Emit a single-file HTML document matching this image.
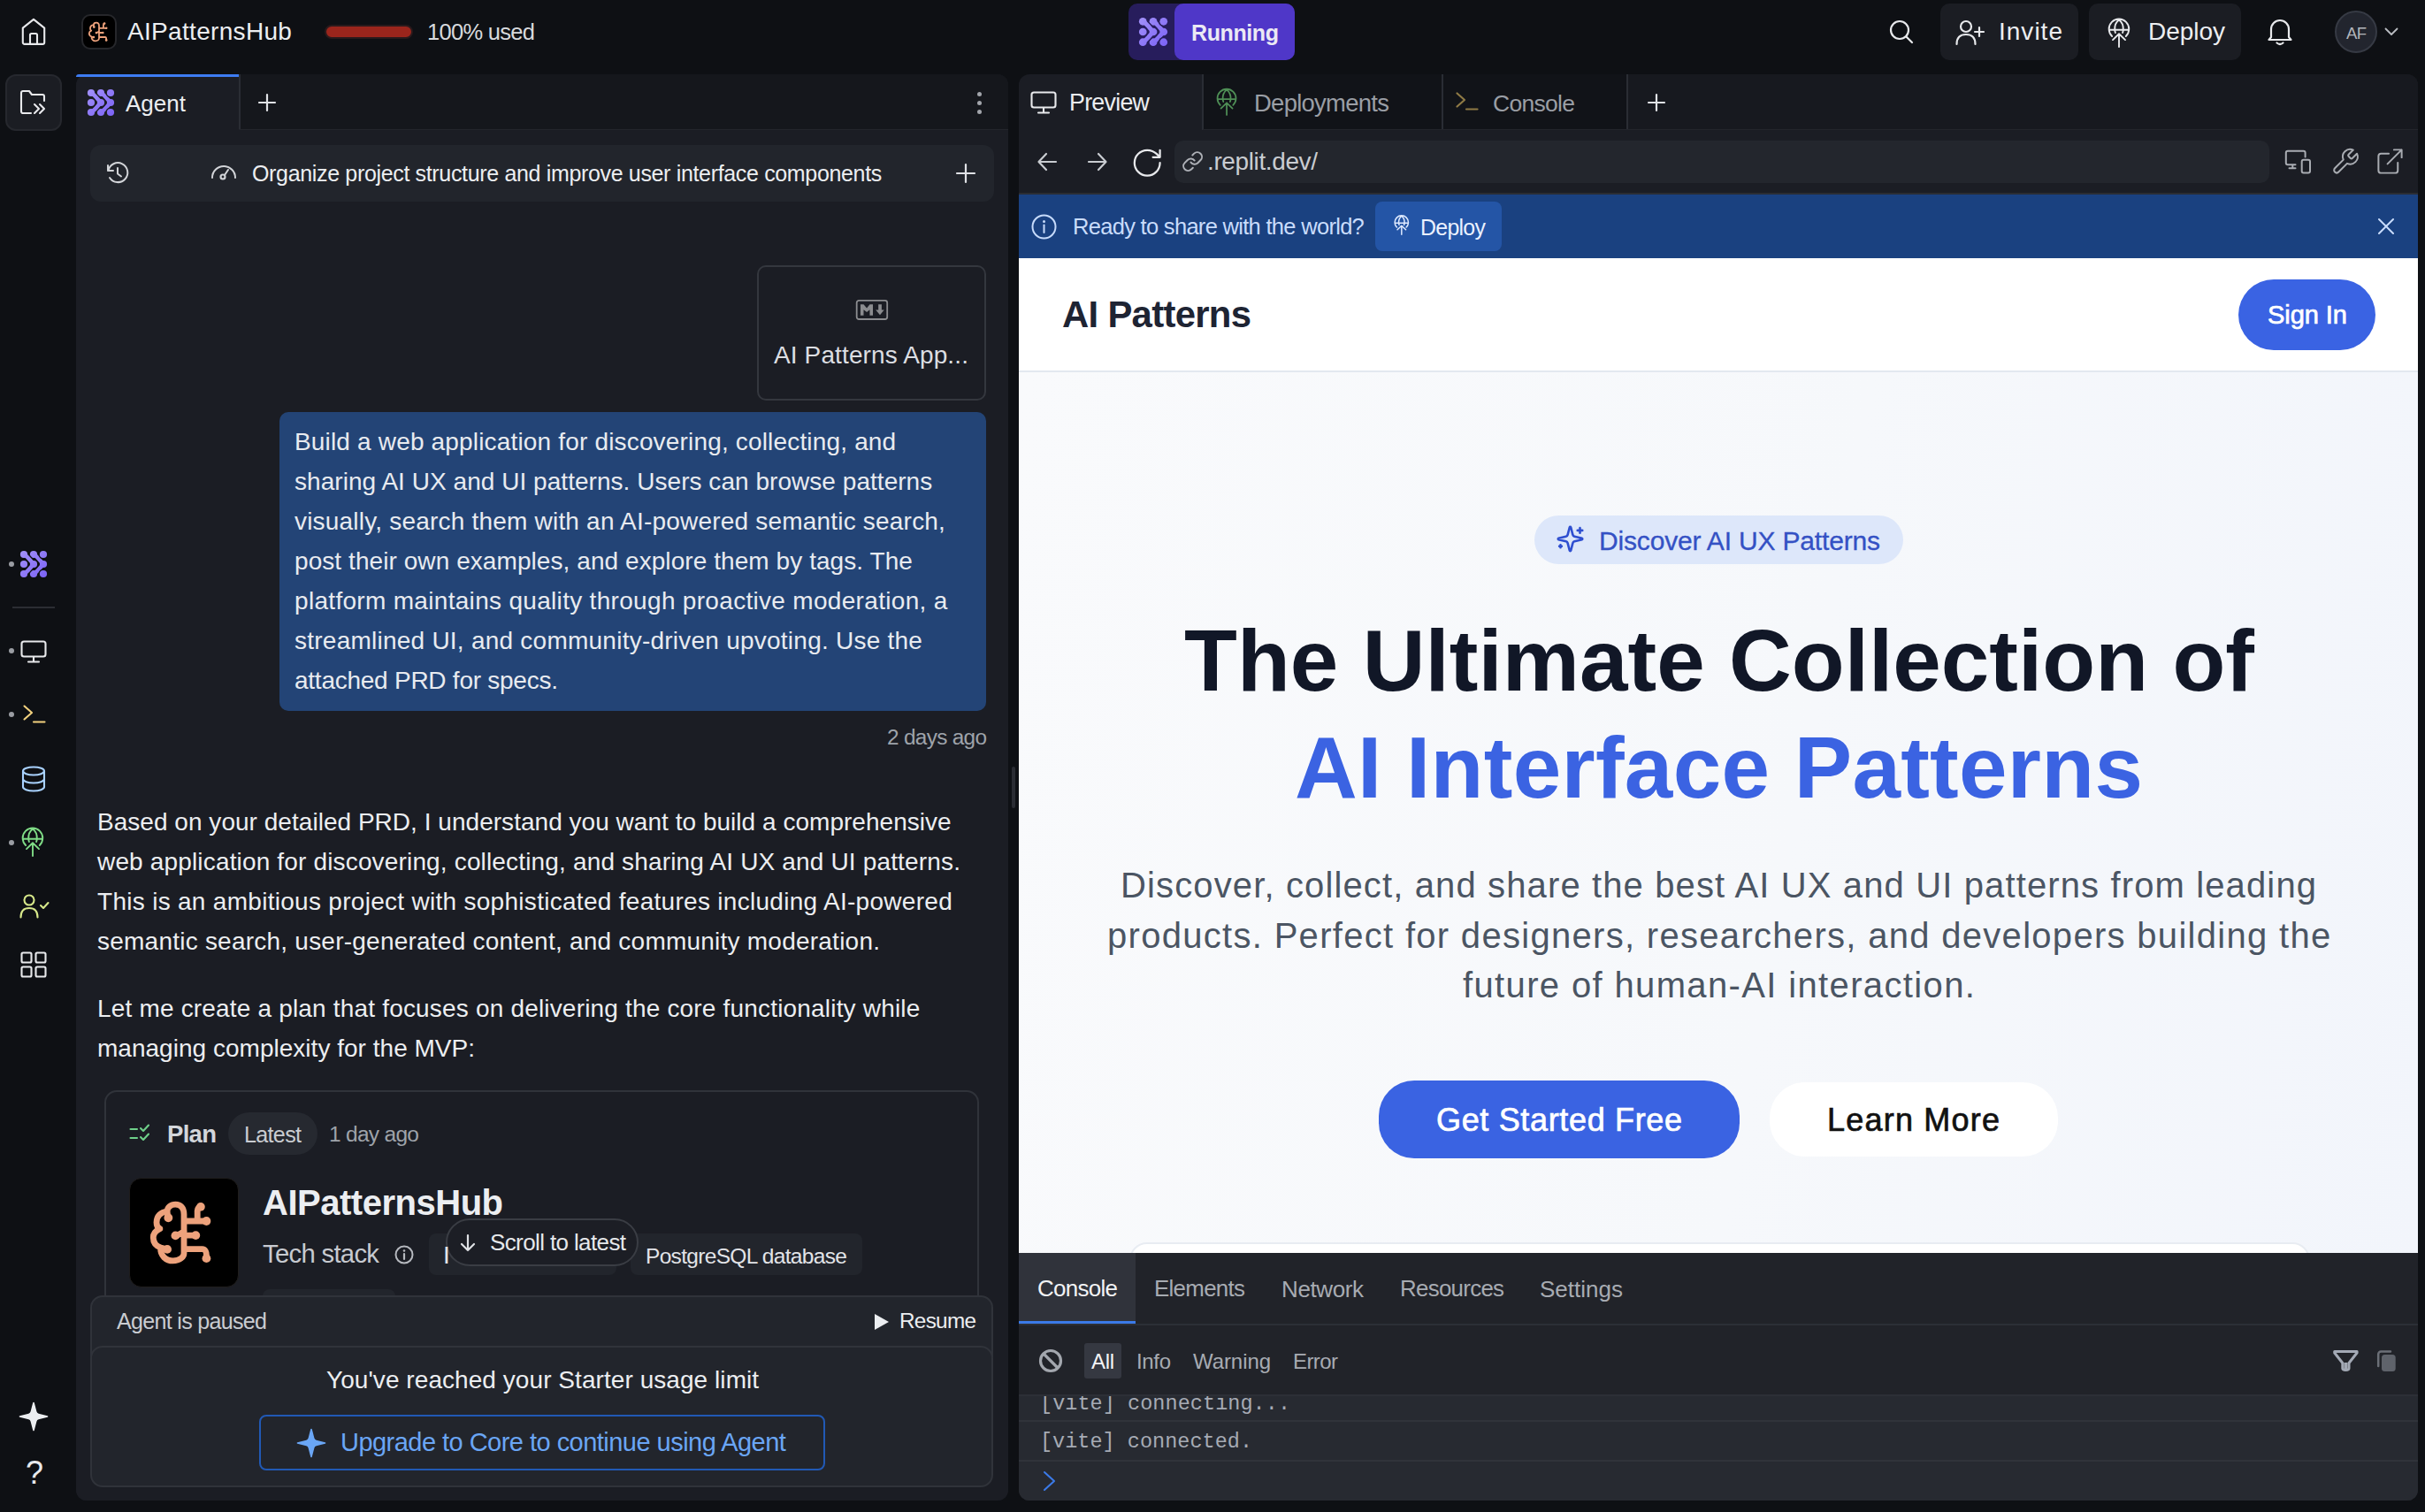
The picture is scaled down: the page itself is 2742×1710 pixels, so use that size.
<!DOCTYPE html>
<html><head><meta charset="utf-8"><style>
html,body{margin:0;padding:0;}
body{width:2742px;height:1710px;overflow:hidden;position:relative;background:#0e1014;font-family:'Liberation Sans', sans-serif;}
.t{position:absolute;white-space:pre;line-height:1;}
svg{overflow:visible}
</style></head><body>
<svg style="position:absolute;left:22px;top:20px;" width="32" height="32" viewBox="0 0 32 32" fill="none"><path d="M3.8 11.6 L16 1.9 L28.2 11.6 V27.9 a2 2 0 0 1 -2 2 H5.8 a2 2 0 0 1 -2 -2 Z M12 29.9 V19.5 a1.5 1.5 0 0 1 1.5 -1.5 H18.5 a1.5 1.5 0 0 1 1.5 1.5 V29.9" stroke="#e8e9ec" stroke-width="2.1" stroke-linejoin="round"/></svg>
<div style="position:absolute;left:92px;top:16px;width:40px;height:40px;background:#000;border-radius:10px;border:2px solid #26272b;box-sizing:border-box;"></div>
<svg style="position:absolute;left:92px;top:16px;" width="40" height="40" viewBox="0 0 40 40" fill="none"><path d="M20 27.6 V13.3 C20 11 18.8 9.7 16.9 9.7 C15.2 9.7 13.9 10.8 13.9 12.2 M13.9 12.2 C13.9 13.2 14.1 14 14.3 14.6 M13.9 12.2 C11.5 12.5 10 14 10 16.3 C10 17.5 10.4 18.2 11.2 18.6 M11.2 18.6 C9.6 19.4 8.8 20.5 8.8 21.8 C8.8 23.6 9.8 24.9 11.5 25.5 M11.5 25.5 C12.4 25.8 13.2 26 13.9 26.1 M11.5 25.5 C11.3 28.5 13.5 30.3 16 30.3 C18.5 30.3 20 28.8 20 27.6 M16.9 21.1 C18 21 19 20.3 20 19.5 M20 21 H24.3 M20 15.8 H28.2 M24.9 15.8 V12 C24.9 11.2 25.4 10.6 26.1 10.6 M20 26 H26.7 C27.8 26 28.2 27.2 28.2 28.2 V29.4" stroke="#eda27c" stroke-width="1.8" stroke-linecap="round" stroke-linejoin="round" fill="none"/><circle cx="26.1" cy="10.6" r="1.30" fill="#eda27c"/><circle cx="28.2" cy="15.8" r="1.30" fill="#eda27c"/><circle cx="24.3" cy="21" r="1.30" fill="#eda27c"/><circle cx="16.9" cy="21.1" r="1.30" fill="#eda27c"/><circle cx="28.2" cy="29.4" r="1.30" fill="#eda27c"/><circle cx="14.3" cy="14.6" r="1.30" fill="#eda27c"/><circle cx="13.9" cy="26.1" r="1.30" fill="#eda27c"/></svg>
<div class="t" style="left:144.0px;top:22.2px;font-family:'Liberation Sans', sans-serif;font-size:28.00px;font-weight:400;color:#eceef1;letter-spacing:0.32px;">AIPatternsHub</div>
<div style="position:absolute;left:367px;top:28px;width:100px;height:16px;background:#9b251c;border-radius:8px;border:2px solid #2a1a1c;box-sizing:border-box;"></div>
<div class="t" style="left:483.0px;top:24.3px;font-family:'Liberation Sans', sans-serif;font-size:25.50px;font-weight:400;color:#d8dadd;letter-spacing:-0.70px;">100% used</div>
<div style="position:absolute;left:1276px;top:4px;width:188px;height:64px;background:#271d5c;border-radius:10px;"></div>
<div style="position:absolute;left:1328px;top:4px;width:136px;height:64px;background:#4f37c8;border-radius:10px;"></div>
<svg style="position:absolute;left:1288px;top:20px;" width="32" height="32" viewBox="0 0 30 30" fill="none"><defs><linearGradient id="ag1" gradientUnits="userSpaceOnUse" x1="0" y1="0" x2="30" y2="30"><stop offset="0" stop-color="#a291f8"/><stop offset="1" stop-color="#7b62f6"/></linearGradient></defs><path d="M15 4 C19 6 23 12 26 15 C23 18 19 24 15 26" stroke="#271d5c" stroke-width="7.3999999999999995" stroke-linecap="round" stroke-linejoin="round"/><circle cx="15" cy="4" r="5.5" fill="#271d5c"/><circle cx="26" cy="15" r="5.5" fill="#271d5c"/><circle cx="15" cy="26" r="5.5" fill="#271d5c"/><path d="M15 4 C19 6 23 12 26 15 C23 18 19 24 15 26" stroke="url(#ag1)" stroke-width="4.6" stroke-linecap="round" stroke-linejoin="round"/><circle cx="15" cy="4" r="4.1" fill="url(#ag1)"/><circle cx="26" cy="15" r="4.1" fill="url(#ag1)"/><circle cx="15" cy="26" r="4.1" fill="url(#ag1)"/><circle cx="26" cy="4" r="5.5" fill="#271d5c"/><circle cx="26" cy="4" r="4.1" fill="url(#ag1)"/><circle cx="26" cy="26" r="5.5" fill="#271d5c"/><circle cx="26" cy="26" r="4.1" fill="url(#ag1)"/><path d="M4 4 C8 6 12 12 15 15 C12 18 8 24 4 26" stroke="#271d5c" stroke-width="7.3999999999999995" stroke-linecap="round" stroke-linejoin="round"/><circle cx="4" cy="4" r="5.5" fill="#271d5c"/><circle cx="15" cy="15" r="5.5" fill="#271d5c"/><circle cx="4" cy="26" r="5.5" fill="#271d5c"/><path d="M4 4 C8 6 12 12 15 15 C12 18 8 24 4 26" stroke="url(#ag1)" stroke-width="4.6" stroke-linecap="round" stroke-linejoin="round"/><circle cx="4" cy="4" r="4.1" fill="url(#ag1)"/><circle cx="15" cy="15" r="4.1" fill="url(#ag1)"/><circle cx="4" cy="26" r="4.1" fill="url(#ag1)"/><circle cx="4" cy="15" r="5.5" fill="#271d5c"/><circle cx="4" cy="15" r="4.1" fill="url(#ag1)"/></svg>
<div class="t" style="left:1347.0px;top:24.8px;font-family:'Liberation Sans', sans-serif;font-size:25.00px;font-weight:700;color:#ebe9f4;letter-spacing:-0.39px;">Running</div>
<svg style="position:absolute;left:2136px;top:22px;" width="28" height="28" viewBox="0 0 28 28" fill="none"><circle cx="12" cy="12" r="10" stroke="#e8e9ec" stroke-width="2.2"/><path d="M19.5 19.5 L26 26" stroke="#e8e9ec" stroke-width="2.2" stroke-linecap="round"/></svg>
<div style="position:absolute;left:2194px;top:4px;width:156px;height:64px;background:#1b1d23;border-radius:10px;"></div>
<svg style="position:absolute;left:2211px;top:22px;" width="34" height="30" viewBox="0 0 34 30" fill="none"><circle cx="12" cy="8" r="6" stroke="#e8e9ec" stroke-width="2.2"/><path d="M1.5 28 C1.5 20 6 17 12 17 C18 17 22.5 20 22.5 28" stroke="#e8e9ec" stroke-width="2.2" stroke-linecap="round"/><path d="M27 9 V19 M22 14 H32" stroke="#e8e9ec" stroke-width="2.2" stroke-linecap="round"/></svg>
<div class="t" style="left:2260.0px;top:22.2px;font-family:'Liberation Sans', sans-serif;font-size:28.00px;font-weight:400;color:#eceef1;letter-spacing:1.01px;">Invite</div>
<div style="position:absolute;left:2362px;top:4px;width:172px;height:64px;background:#1b1d23;border-radius:10px;"></div>
<svg style="position:absolute;left:2383px;top:22px;" width="28" height="32" viewBox="0 0 28 32" fill="none"><path d="M5.1 19 A11.3 11.3 0 1 1 20.8 19 M1.9 11.8 H24.1 M13 0.5 C9.5 3 8 7 8.2 11.8 C8.3 13 8.6 14 8.9 15 M13 0.5 C16.5 3 18 7 17.8 11.8 C17.7 13 17.4 14 17.1 15 M13 17.5 V31 M6 23.1 L13 16.3 L20 23.1" stroke="#e8e9ec" stroke-width="1.9" stroke-linecap="round" stroke-linejoin="round"/></svg>
<div class="t" style="left:2429.0px;top:22.2px;font-family:'Liberation Sans', sans-serif;font-size:28.00px;font-weight:400;color:#eceef1;letter-spacing:-0.03px;">Deploy</div>
<svg style="position:absolute;left:2563px;top:20px;" width="30" height="32" viewBox="0 0 30 32" fill="none"><path d="M5 22 V13 A10 10 0 0 1 25 13 V22 L27.5 25 H2.5 Z" stroke="#e8e9ec" stroke-width="2.2" stroke-linejoin="round"/><path d="M11.5 28.5 Q15 31.5 18.5 28.5" stroke="#e8e9ec" stroke-width="2.2" stroke-linecap="round"/></svg>
<div style="position:absolute;left:2640px;top:12px;width:48px;height:48px;background:#22252e;border-radius:50%;border:2px solid #363a44;box-sizing:border-box;"></div>
<div class="t" style="left:2653.0px;top:29.2px;font-family:'Liberation Sans', sans-serif;font-size:18.54px;font-weight:400;color:#b3b6bc;letter-spacing:-0.70px;">AF</div>
<svg style="position:absolute;left:2696px;top:31px;" width="16" height="10" viewBox="0 0 16 10" fill="none"><path d="M1.5 1.5 L8 8 L14.5 1.5" stroke="#b9bcc2" stroke-width="1.8" stroke-linecap="round" stroke-linejoin="round"/></svg>
<div style="position:absolute;left:6px;top:84px;width:64px;height:64px;background:#1b1d23;border-radius:12px;border:2px solid #26282e;box-sizing:border-box;"></div>
<svg style="position:absolute;left:22px;top:101px;" width="32" height="30" viewBox="0 0 32 30" fill="none"><path d="M13 27 H4 a2 2 0 0 1 -2 -2 V4 a2 2 0 0 1 2 -2 H11 L14 6 H26 a2 2 0 0 1 2 2 V13" stroke="#e8e9ec" stroke-width="2.1" stroke-linejoin="round" stroke-linecap="round"/><path d="M17 17 L22 22 L17 27 M23 17 L28 22 L23 27" stroke="#e8e9ec" stroke-width="2.1" stroke-linecap="round" stroke-linejoin="round"/></svg>
<div style="position:absolute;left:10px;top:635px;width:6px;height:6px;background:#9a9da3;border-radius:50%;"></div>
<svg style="position:absolute;left:23px;top:623px;" width="30" height="30" viewBox="0 0 30 30" fill="none"><defs><linearGradient id="ag2" gradientUnits="userSpaceOnUse" x1="0" y1="0" x2="30" y2="30"><stop offset="0" stop-color="#a291f8"/><stop offset="1" stop-color="#7b62f6"/></linearGradient></defs><path d="M15 4 C19 6 23 12 26 15 C23 18 19 24 15 26" stroke="#0e1014" stroke-width="7.3999999999999995" stroke-linecap="round" stroke-linejoin="round"/><circle cx="15" cy="4" r="5.5" fill="#0e1014"/><circle cx="26" cy="15" r="5.5" fill="#0e1014"/><circle cx="15" cy="26" r="5.5" fill="#0e1014"/><path d="M15 4 C19 6 23 12 26 15 C23 18 19 24 15 26" stroke="url(#ag2)" stroke-width="4.6" stroke-linecap="round" stroke-linejoin="round"/><circle cx="15" cy="4" r="4.1" fill="url(#ag2)"/><circle cx="26" cy="15" r="4.1" fill="url(#ag2)"/><circle cx="15" cy="26" r="4.1" fill="url(#ag2)"/><circle cx="26" cy="4" r="5.5" fill="#0e1014"/><circle cx="26" cy="4" r="4.1" fill="url(#ag2)"/><circle cx="26" cy="26" r="5.5" fill="#0e1014"/><circle cx="26" cy="26" r="4.1" fill="url(#ag2)"/><path d="M4 4 C8 6 12 12 15 15 C12 18 8 24 4 26" stroke="#0e1014" stroke-width="7.3999999999999995" stroke-linecap="round" stroke-linejoin="round"/><circle cx="4" cy="4" r="5.5" fill="#0e1014"/><circle cx="15" cy="15" r="5.5" fill="#0e1014"/><circle cx="4" cy="26" r="5.5" fill="#0e1014"/><path d="M4 4 C8 6 12 12 15 15 C12 18 8 24 4 26" stroke="url(#ag2)" stroke-width="4.6" stroke-linecap="round" stroke-linejoin="round"/><circle cx="4" cy="4" r="4.1" fill="url(#ag2)"/><circle cx="15" cy="15" r="4.1" fill="url(#ag2)"/><circle cx="4" cy="26" r="4.1" fill="url(#ag2)"/><circle cx="4" cy="15" r="5.5" fill="#0e1014"/><circle cx="4" cy="15" r="4.1" fill="url(#ag2)"/></svg>
<div style="position:absolute;left:14px;top:686px;width:48px;height:2px;background:#2b2d33;border-radius:0;"></div>
<div style="position:absolute;left:10px;top:733px;width:6px;height:6px;background:#9a9da3;border-radius:50%;"></div>
<svg style="position:absolute;left:23px;top:724px;" width="30" height="26" viewBox="0 0 30 26" fill="none"><rect x="1.5" y="1.5" width="27" height="17" rx="2.5" stroke="#e8e9ec" stroke-width="2.1"/><path d="M15 19 V24 M9 24.5 H21" stroke="#e8e9ec" stroke-width="2.1" stroke-linecap="round"/></svg>
<div style="position:absolute;left:10px;top:805px;width:6px;height:6px;background:#9a9da3;border-radius:50%;"></div>
<svg style="position:absolute;left:26px;top:797px;" width="26" height="22" viewBox="0 0 26 22" fill="none"><path d="M1.5 1.5 L10 9 L1.5 16.5" stroke="#f3d27f" stroke-width="2.1" stroke-linecap="round" stroke-linejoin="round"/><path d="M12 19.5 H24.5" stroke="#f3d27f" stroke-width="2.1" stroke-linecap="round"/></svg>
<svg style="position:absolute;left:24px;top:866px;" width="28" height="30" viewBox="0 0 28 30" fill="none"><ellipse cx="14" cy="6" rx="12" ry="4.5" stroke="#a9d2ff" stroke-width="2.1"/><path d="M2 6 V24 C2 26.5 7.5 28.5 14 28.5 C20.5 28.5 26 26.5 26 24 V6 M2 15 C2 17.5 7.5 19.5 14 19.5 C20.5 19.5 26 17.5 26 15" stroke="#a9d2ff" stroke-width="2.1"/></svg>
<div style="position:absolute;left:10px;top:950px;width:6px;height:6px;background:#9a9da3;border-radius:50%;"></div>
<svg style="position:absolute;left:24px;top:937px;" width="28" height="32" viewBox="0 0 28 32" fill="none"><path d="M5.1 19 A11.3 11.3 0 1 1 20.8 19 M1.9 11.8 H24.1 M13 0.5 C9.5 3 8 7 8.2 11.8 C8.3 13 8.6 14 8.9 15 M13 0.5 C16.5 3 18 7 17.8 11.8 C17.7 13 17.4 14 17.1 15 M13 17.5 V31 M6 23.1 L13 16.3 L20 23.1" stroke="#7fdc86" stroke-width="1.9" stroke-linecap="round" stroke-linejoin="round"/></svg>
<svg style="position:absolute;left:22px;top:1011px;" width="34" height="28" viewBox="0 0 34 28" fill="none"><circle cx="11" cy="7" r="5.5" stroke="#d7e88a" stroke-width="2.1"/><path d="M1.5 26.5 C1.5 19 5.5 16 11 16 C16.5 16 20.5 19 20.5 26.5" stroke="#d7e88a" stroke-width="2.1" stroke-linecap="round"/><path d="M24 13 L27 16 L32.5 10" stroke="#d7e88a" stroke-width="2.1" stroke-linecap="round" stroke-linejoin="round"/></svg>
<svg style="position:absolute;left:23px;top:1076px;" width="30" height="30" viewBox="0 0 30 30" fill="none"><rect x="1.5" y="1.5" width="11" height="11" rx="1.5" stroke="#e8e9ec" stroke-width="2.1"/><rect x="17.5" y="1.5" width="11" height="11" rx="1.5" stroke="#e8e9ec" stroke-width="2.1"/><rect x="1.5" y="17.5" width="11" height="11" rx="1.5" stroke="#e8e9ec" stroke-width="2.1"/><rect x="17.5" y="17.5" width="11" height="11" rx="1.5" stroke="#e8e9ec" stroke-width="2.1"/></svg>
<svg style="position:absolute;left:22px;top:1586px;" width="32" height="32" viewBox="2.2 2.2 19.6 19.6" fill="none"><path d="M9.937 15.5A2 2 0 0 0 8.5 14.063l-6.135-1.582a.5.5 0 0 1 0-.962L8.5 9.936A2 2 0 0 0 9.937 8.5l1.582-6.135a.5.5 0 0 1 .963 0L14.063 8.5A2 2 0 0 0 15.5 9.937l6.135 1.581a.5.5 0 0 1 0 .964L15.5 14.063a2 2 0 0 0-1.437 1.437l-1.582 6.135a.5.5 0 0 1-.963 0z" fill="#eceef1"/></svg>
<div class="t" style="left:29.0px;top:1648.4px;font-family:'Liberation Sans', sans-serif;font-size:36.00px;font-weight:400;color:#e8e9ec;">?</div>
<div style="position:absolute;left:86px;top:84px;width:1054px;height:1613px;background:#1b1d24;border-radius:12px;"></div>
<div style="position:absolute;left:270px;top:84px;width:870px;height:63px;background:#15171c;border-radius:0 12px 0 0;"></div>
<div style="position:absolute;left:270px;top:84px;width:2px;height:63px;background:#2a2d34;border-radius:0;"></div>
<div style="position:absolute;left:270px;top:146px;width:870px;height:1px;background:#23252b;border-radius:0;"></div>
<div style="position:absolute;left:86px;top:84px;width:184px;height:3px;background:#3d7cf2;border-radius:12px 0 0 0;"></div>
<svg style="position:absolute;left:99px;top:101px;" width="30" height="30" viewBox="0 0 30 30" fill="none"><defs><linearGradient id="ag3" gradientUnits="userSpaceOnUse" x1="0" y1="0" x2="30" y2="30"><stop offset="0" stop-color="#a291f8"/><stop offset="1" stop-color="#7b62f6"/></linearGradient></defs><path d="M15 4 C19 6 23 12 26 15 C23 18 19 24 15 26" stroke="#1b1d24" stroke-width="7.3999999999999995" stroke-linecap="round" stroke-linejoin="round"/><circle cx="15" cy="4" r="5.5" fill="#1b1d24"/><circle cx="26" cy="15" r="5.5" fill="#1b1d24"/><circle cx="15" cy="26" r="5.5" fill="#1b1d24"/><path d="M15 4 C19 6 23 12 26 15 C23 18 19 24 15 26" stroke="url(#ag3)" stroke-width="4.6" stroke-linecap="round" stroke-linejoin="round"/><circle cx="15" cy="4" r="4.1" fill="url(#ag3)"/><circle cx="26" cy="15" r="4.1" fill="url(#ag3)"/><circle cx="15" cy="26" r="4.1" fill="url(#ag3)"/><circle cx="26" cy="4" r="5.5" fill="#1b1d24"/><circle cx="26" cy="4" r="4.1" fill="url(#ag3)"/><circle cx="26" cy="26" r="5.5" fill="#1b1d24"/><circle cx="26" cy="26" r="4.1" fill="url(#ag3)"/><path d="M4 4 C8 6 12 12 15 15 C12 18 8 24 4 26" stroke="#1b1d24" stroke-width="7.3999999999999995" stroke-linecap="round" stroke-linejoin="round"/><circle cx="4" cy="4" r="5.5" fill="#1b1d24"/><circle cx="15" cy="15" r="5.5" fill="#1b1d24"/><circle cx="4" cy="26" r="5.5" fill="#1b1d24"/><path d="M4 4 C8 6 12 12 15 15 C12 18 8 24 4 26" stroke="url(#ag3)" stroke-width="4.6" stroke-linecap="round" stroke-linejoin="round"/><circle cx="4" cy="4" r="4.1" fill="url(#ag3)"/><circle cx="15" cy="15" r="4.1" fill="url(#ag3)"/><circle cx="4" cy="26" r="4.1" fill="url(#ag3)"/><circle cx="4" cy="15" r="5.5" fill="#1b1d24"/><circle cx="4" cy="15" r="4.1" fill="url(#ag3)"/></svg>
<div class="t" style="left:142.0px;top:103.9px;font-family:'Liberation Sans', sans-serif;font-size:26.00px;font-weight:400;color:#eceef1;letter-spacing:0.01px;">Agent</div>
<svg style="position:absolute;left:292px;top:106px;" width="20" height="20" viewBox="0 0 20 20" fill="none"><path d="M10 1 V19 M1 10 H19" stroke="#e0e2e6" stroke-width="2.2" stroke-linecap="round"/></svg>
<div style="position:absolute;left:1105px;top:103.5px;width:5px;height:5px;background:#a2a5ab;border-radius:50%;"></div>
<div style="position:absolute;left:1105px;top:113.5px;width:5px;height:5px;background:#a2a5ab;border-radius:50%;"></div>
<div style="position:absolute;left:1105px;top:123.5px;width:5px;height:5px;background:#a2a5ab;border-radius:50%;"></div>
<div style="position:absolute;left:102px;top:164px;width:1022px;height:64px;background:#22252c;border-radius:12px;"></div>
<svg style="position:absolute;left:118px;top:181px;" width="30" height="30" viewBox="0 0 30 30" fill="none"><path d="M4 6 V12 H10" stroke="#d2d4d8" stroke-width="2" stroke-linecap="round" stroke-linejoin="round"/><path d="M4.5 12 A11 11 0 1 1 6 20" stroke="#d2d4d8" stroke-width="2" stroke-linecap="round"/><path d="M15 9 V15.5 L19 18.5" stroke="#d2d4d8" stroke-width="2" stroke-linecap="round" stroke-linejoin="round"/></svg>
<svg style="position:absolute;left:238px;top:183px;" width="30" height="22" viewBox="0 0 30 22" fill="none"><path d="M2 18 A13 13 0 0 1 28 18" stroke="#d2d4d8" stroke-width="2" stroke-linecap="round"/><circle cx="14" cy="17" r="2.5" stroke="#d2d4d8" stroke-width="2.2"/><path d="M16 15 L20 9" stroke="#d2d4d8" stroke-width="2" stroke-linecap="round"/></svg>
<div class="t" style="left:285.0px;top:183.8px;font-family:'Liberation Sans', sans-serif;font-size:25.00px;font-weight:400;color:#eceef1;letter-spacing:-0.34px;">Organize project structure and improve user interface components</div>
<svg style="position:absolute;left:1081px;top:185px;" width="22" height="22" viewBox="0 0 22 22" fill="none"><path d="M11 1 V21 M1 11 H21" stroke="#e0e2e6" stroke-width="2.2" stroke-linecap="round"/></svg>
<div style="position:absolute;left:856px;top:300px;width:259px;height:153px;background:#1b1d24;border-radius:10px;border:2px solid #34373e;box-sizing:border-box;"></div>
<svg style="position:absolute;left:967px;top:338px;" width="38" height="26" viewBox="0 0 38 26" fill="none"><rect x="1.7" y="1.95" width="34.5" height="21.05" rx="2.5" stroke="#8b8c8f" stroke-width="1.8"/><path d="M5.94 6.2 H9.5 L13.1 10.6 L16.45 6.2 H20 V18.7 H16.45 V12.2 L13.1 14.9 L9.5 12.2 V18.7 H5.94 Z" fill="#8b8c8f"/><path d="M26.2 6.2 H29.9 V12.6 H32.7 L28 18.3 L23.2 12.6 H26.2 Z" fill="#8b8c8f"/></svg>
<div class="t" style="left:875.0px;top:388.2px;font-family:'Liberation Sans', sans-serif;font-size:28.00px;font-weight:400;color:#dcdee2;letter-spacing:0.12px;">AI Patterns App...</div>
<div style="position:absolute;left:316px;top:466px;width:799px;height:338px;background:#234476;border-radius:10px;"></div>
<div class="t" style="left:333.0px;top:486.2px;font-family:'Liberation Sans', sans-serif;font-size:28.00px;font-weight:400;color:#e8ebf0;letter-spacing:0.17px;">Build a web application for discovering, collecting, and</div>
<div class="t" style="left:333.0px;top:531.2px;font-family:'Liberation Sans', sans-serif;font-size:28.00px;font-weight:400;color:#e8ebf0;letter-spacing:0.04px;">sharing AI UX and UI patterns. Users can browse patterns</div>
<div class="t" style="left:333.0px;top:576.2px;font-family:'Liberation Sans', sans-serif;font-size:28.00px;font-weight:400;color:#e8ebf0;letter-spacing:0.20px;">visually, search them with an AI-powered semantic search,</div>
<div class="t" style="left:333.0px;top:621.2px;font-family:'Liberation Sans', sans-serif;font-size:28.00px;font-weight:400;color:#e8ebf0;letter-spacing:0.07px;">post their own examples, and explore them by tags. The</div>
<div class="t" style="left:333.0px;top:666.2px;font-family:'Liberation Sans', sans-serif;font-size:28.00px;font-weight:400;color:#e8ebf0;letter-spacing:0.31px;">platform maintains quality through proactive moderation, a</div>
<div class="t" style="left:333.0px;top:711.2px;font-family:'Liberation Sans', sans-serif;font-size:28.00px;font-weight:400;color:#e8ebf0;letter-spacing:0.24px;">streamlined UI, and community-driven upvoting. Use the</div>
<div class="t" style="left:333.0px;top:756.2px;font-family:'Liberation Sans', sans-serif;font-size:28.00px;font-weight:400;color:#e8ebf0;letter-spacing:-0.25px;">attached PRD for specs.</div>
<div class="t" style="left:1003.0px;top:822.3px;font-family:'Liberation Sans', sans-serif;font-size:24.38px;font-weight:400;color:#9ea3aa;letter-spacing:-0.70px;">2 days ago</div>
<div class="t" style="left:110.0px;top:916.2px;font-family:'Liberation Sans', sans-serif;font-size:28.00px;font-weight:400;color:#eceef1;letter-spacing:0.03px;">Based on your detailed PRD, I understand you want to build a comprehensive</div>
<div class="t" style="left:110.0px;top:961.2px;font-family:'Liberation Sans', sans-serif;font-size:28.00px;font-weight:400;color:#eceef1;letter-spacing:0.16px;">web application for discovering, collecting, and sharing AI UX and UI patterns.</div>
<div class="t" style="left:110.0px;top:1006.2px;font-family:'Liberation Sans', sans-serif;font-size:28.00px;font-weight:400;color:#eceef1;letter-spacing:0.29px;">This is an ambitious project with sophisticated features including AI-powered</div>
<div class="t" style="left:110.0px;top:1051.2px;font-family:'Liberation Sans', sans-serif;font-size:28.00px;font-weight:400;color:#eceef1;letter-spacing:0.23px;">semantic search, user-generated content, and community moderation.</div>
<div class="t" style="left:110.0px;top:1127.2px;font-family:'Liberation Sans', sans-serif;font-size:28.00px;font-weight:400;color:#eceef1;letter-spacing:0.18px;">Let me create a plan that focuses on delivering the core functionality while</div>
<div class="t" style="left:110.0px;top:1172.2px;font-family:'Liberation Sans', sans-serif;font-size:28.00px;font-weight:400;color:#eceef1;letter-spacing:0.02px;">managing complexity for the MVP:</div>
<div style="position:absolute;left:118px;top:1233px;width:989px;height:250px;background:#1b1d24;border-radius:14px;border:2px solid #30333a;box-sizing:border-box;"></div>
<svg style="position:absolute;left:146px;top:1270px;" width="30" height="22" viewBox="0 0 30 22" fill="none"><path d="M1.5 7 H9 M1.5 17 H9" stroke="#6fd08a" stroke-width="2.1" stroke-linecap="round"/><path d="M13 6 L16 9 L22 2.5 M13 16 L16 19 L22 12.5" stroke="#6fd08a" stroke-width="2.1" stroke-linecap="round" stroke-linejoin="round"/></svg>
<div class="t" style="left:189.0px;top:1268.6px;font-family:'Liberation Sans', sans-serif;font-size:27.51px;font-weight:700;color:#d3d6db;letter-spacing:-0.70px;">Plan</div>
<div style="position:absolute;left:258px;top:1258px;width:101px;height:48px;background:#262930;border-radius:24px;"></div>
<div class="t" style="left:276.0px;top:1270.6px;font-family:'Liberation Sans', sans-serif;font-size:25.15px;font-weight:400;color:#c9ccd1;letter-spacing:-0.70px;">Latest</div>
<div class="t" style="left:372.0px;top:1271.2px;font-family:'Liberation Sans', sans-serif;font-size:24.49px;font-weight:400;color:#9ea3aa;letter-spacing:-0.70px;">1 day ago</div>
<div style="position:absolute;left:146px;top:1332px;width:124px;height:124px;background:#000;border-radius:14px;border:1.5px solid #1f1d1c;box-sizing:border-box;"></div>
<svg style="position:absolute;left:146px;top:1332px;" width="124" height="124" viewBox="0 0 40 40" fill="none"><path d="M20 27.6 V13.3 C20 11 18.8 9.7 16.9 9.7 C15.2 9.7 13.9 10.8 13.9 12.2 M13.9 12.2 C13.9 13.2 14.1 14 14.3 14.6 M13.9 12.2 C11.5 12.5 10 14 10 16.3 C10 17.5 10.4 18.2 11.2 18.6 M11.2 18.6 C9.6 19.4 8.8 20.5 8.8 21.8 C8.8 23.6 9.8 24.9 11.5 25.5 M11.5 25.5 C12.4 25.8 13.2 26 13.9 26.1 M11.5 25.5 C11.3 28.5 13.5 30.3 16 30.3 C18.5 30.3 20 28.8 20 27.6 M16.9 21.1 C18 21 19 20.3 20 19.5 M20 21 H24.3 M20 15.8 H28.2 M24.9 15.8 V12 C24.9 11.2 25.4 10.6 26.1 10.6 M20 26 H26.7 C27.8 26 28.2 27.2 28.2 28.2 V29.4" stroke="#eda27c" stroke-width="2.2" stroke-linecap="round" stroke-linejoin="round" fill="none"/><circle cx="26.1" cy="10.6" r="1.58" fill="#eda27c"/><circle cx="28.2" cy="15.8" r="1.58" fill="#eda27c"/><circle cx="24.3" cy="21" r="1.58" fill="#eda27c"/><circle cx="16.9" cy="21.1" r="1.58" fill="#eda27c"/><circle cx="28.2" cy="29.4" r="1.58" fill="#eda27c"/><circle cx="14.3" cy="14.6" r="1.58" fill="#eda27c"/><circle cx="13.9" cy="26.1" r="1.58" fill="#eda27c"/></svg>
<div class="t" style="left:297.0px;top:1340.0px;font-family:'Liberation Sans', sans-serif;font-size:40.00px;font-weight:700;color:#eceef1;letter-spacing:-0.48px;">AIPatternsHub</div>
<div class="t" style="left:297.0px;top:1404.1px;font-family:'Liberation Sans', sans-serif;font-size:29.27px;font-weight:400;color:#c7cad0;letter-spacing:-0.70px;">Tech stack</div>
<svg style="position:absolute;left:446px;top:1408px;" width="22" height="22" viewBox="0 0 22 22" fill="none"><circle cx="11" cy="11" r="9.5" stroke="#b6b9bf" stroke-width="2"/><path d="M11 10 V16" stroke="#b6b9bf" stroke-width="2.2" stroke-linecap="round"/><circle cx="11" cy="6.5" r="1.3" fill="#b6b9bf"/></svg>
<div style="position:absolute;left:485px;top:1395px;width:212px;height:47px;background:#22252c;border-radius:8px;"></div>
<div style="position:absolute;left:713px;top:1395px;width:262px;height:47px;background:#22252c;border-radius:8px;"></div>
<div class="t" style="left:730.0px;top:1409.1px;font-family:'Liberation Sans', sans-serif;font-size:24.54px;font-weight:400;color:#e2e4e8;letter-spacing:-0.70px;">PostgreSQL database</div>
<div style="position:absolute;left:297px;top:1458px;width:150px;height:40px;background:#22252c;border-radius:8px;"></div>
<div style="position:absolute;left:504px;top:1378px;width:218px;height:54px;background:#1c1e25;border-radius:27px;border:2px solid #3a3d44;box-sizing:border-box;"></div>
<svg style="position:absolute;left:519px;top:1395px;" width="20" height="22" viewBox="0 0 20 22" fill="none"><path d="M10 2 V19 M3 12 L10 19 L17 12" stroke="#dfe1e5" stroke-width="2.2" stroke-linecap="round" stroke-linejoin="round"/></svg>
<div class="t" style="left:554.0px;top:1391.9px;font-family:'Liberation Sans', sans-serif;font-size:26.00px;font-weight:400;color:#e6e8eb;letter-spacing:-0.62px;">Scroll to latest</div>
<div class="t" style="left:501.0px;top:1406.2px;font-family:'Liberation Sans', sans-serif;font-size:28.00px;font-weight:400;color:#e2e4e8;">I</div>
<div style="position:absolute;left:86px;top:1475px;width:1054px;height:222px;background:#1b1d24;border-radius:0 0 12px 12px;"></div>
<div style="position:absolute;left:102px;top:1465px;width:1021px;height:70px;background:#22252c;border-radius:14px 14px 0 0;border:2px solid #30333a;box-sizing:border-box;"></div>
<div class="t" style="left:132.0px;top:1481.7px;font-family:'Liberation Sans', sans-serif;font-size:25.07px;font-weight:400;color:#c9ccd1;letter-spacing:-0.70px;">Agent is paused</div>
<svg style="position:absolute;left:988px;top:1485px;" width="18" height="20" viewBox="0 0 18 20" fill="none"><path d="M1 1 L17 10 L1 19 Z" fill="#eceef1"/></svg>
<div class="t" style="left:1017.0px;top:1482.3px;font-family:'Liberation Sans', sans-serif;font-size:24.30px;font-weight:400;color:#eceef1;letter-spacing:-0.70px;">Resume</div>
<div style="position:absolute;left:102px;top:1522px;width:1021px;height:160px;background:#22252c;border-radius:14px;border:2px solid #30333a;box-sizing:border-box;"></div>
<div class="t" style="left:369.0px;top:1547.2px;font-family:'Liberation Sans', sans-serif;font-size:28.00px;font-weight:400;color:#eceef1;letter-spacing:0.06px;">You&#x27;ve reached your Starter usage limit</div>
<div style="position:absolute;left:293px;top:1600px;width:640px;height:63px;background:transparent;border-radius:8px;border:2.5px solid #2159b5;box-sizing:border-box;"></div>
<svg style="position:absolute;left:336px;top:1616px;" width="32" height="32" viewBox="2.2 2.2 19.6 19.6" fill="none"><path d="M9.937 15.5A2 2 0 0 0 8.5 14.063l-6.135-1.582a.5.5 0 0 1 0-.962L8.5 9.936A2 2 0 0 0 9.937 8.5l1.582-6.135a.5.5 0 0 1 .963 0L14.063 8.5A2 2 0 0 0 15.5 9.937l6.135 1.581a.5.5 0 0 1 0 .964L15.5 14.063a2 2 0 0 0-1.437 1.437l-1.582 6.135a.5.5 0 0 1-.963 0z" fill="#6aa6f5"/></svg>
<div class="t" style="left:385.0px;top:1617.3px;font-family:'Liberation Sans', sans-serif;font-size:29.00px;font-weight:400;color:#6aa6f5;letter-spacing:-0.53px;">Upgrade to Core to continue using Agent</div>
<div style="position:absolute;left:1144px;top:867px;width:4px;height:47px;background:#2a2c33;border-radius:2px;"></div>
<div style="position:absolute;left:1152px;top:84px;width:1582px;height:1613px;background:#1b1d24;border-radius:12px;"></div>
<div style="position:absolute;left:1360px;top:84px;width:1374px;height:63px;background:#17191f;border-radius:0 12px 0 0;"></div>
<div style="position:absolute;left:1360px;top:84px;width:480px;height:63px;background:#111318;border-radius:0;"></div>
<div style="position:absolute;left:1359px;top:84px;width:2px;height:63px;background:#2a2d34;border-radius:0;"></div>
<div style="position:absolute;left:1630px;top:84px;width:2px;height:63px;background:#2a2d34;border-radius:0;"></div>
<div style="position:absolute;left:1839px;top:84px;width:2px;height:63px;background:#2a2d34;border-radius:0;"></div>
<div style="position:absolute;left:1360px;top:146px;width:1374px;height:1px;background:#23252b;border-radius:0;"></div>
<svg style="position:absolute;left:1165px;top:103px;" width="30" height="26" viewBox="0 0 30 26" fill="none"><rect x="1.5" y="1.5" width="27" height="17" rx="2.5" stroke="#e8e9ec" stroke-width="2.1"/><path d="M15 19 V24 M9 24.5 H21" stroke="#e8e9ec" stroke-width="2.1" stroke-linecap="round"/></svg>
<div class="t" style="left:1209.0px;top:103.2px;font-family:'Liberation Sans', sans-serif;font-size:26.76px;font-weight:400;color:#eceef1;letter-spacing:-0.70px;">Preview</div>
<svg style="position:absolute;left:1375px;top:100px;" width="26" height="32" viewBox="0 0 28 32" fill="none"><path d="M5.1 19 A11.3 11.3 0 1 1 20.8 19 M1.9 11.8 H24.1 M13 0.5 C9.5 3 8 7 8.2 11.8 C8.3 13 8.6 14 8.9 15 M13 0.5 C16.5 3 18 7 17.8 11.8 C17.7 13 17.4 14 17.1 15 M13 17.5 V31 M6 23.1 L13 16.3 L20 23.1" stroke="#4f8f56" stroke-width="1.9" stroke-linecap="round" stroke-linejoin="round"/></svg>
<div class="t" style="left:1418.0px;top:102.7px;font-family:'Liberation Sans', sans-serif;font-size:27.42px;font-weight:400;color:#9a9ea5;letter-spacing:-0.70px;">Deployments</div>
<svg style="position:absolute;left:1646px;top:104px;" width="26" height="22" viewBox="0 0 26 22" fill="none"><path d="M1.5 1.5 L10 9 L1.5 16.5" stroke="#8f7a45" stroke-width="2.2" stroke-linecap="round" stroke-linejoin="round"/><path d="M12 19.5 H24.5" stroke="#8f7a45" stroke-width="2.2" stroke-linecap="round"/></svg>
<div class="t" style="left:1688.0px;top:103.5px;font-family:'Liberation Sans', sans-serif;font-size:26.49px;font-weight:400;color:#9a9ea5;letter-spacing:-0.70px;">Console</div>
<svg style="position:absolute;left:1863px;top:106px;" width="20" height="20" viewBox="0 0 20 20" fill="none"><path d="M10 1 V19 M1 10 H19" stroke="#e0e2e6" stroke-width="2.2" stroke-linecap="round"/></svg>
<svg style="position:absolute;left:1173px;top:172px;" width="22" height="22" viewBox="0 0 22 22" fill="none"><path d="M21 11 H2 M10 2 L1.5 11 L10 20" stroke="#c9ccd1" stroke-width="2.2" stroke-linecap="round" stroke-linejoin="round"/></svg>
<svg style="position:absolute;left:1230px;top:172px;" width="22" height="22" viewBox="0 0 22 22" fill="none"><path d="M1 11 H20 M12 2 L20.5 11 L12 20" stroke="#c9ccd1" stroke-width="2.2" stroke-linecap="round" stroke-linejoin="round"/></svg>
<svg style="position:absolute;left:1278.3px;top:165.1px;" width="38.4" height="38.4" viewBox="0 0 24 24" fill="none"><path d="M21 12a9 9 0 1 1-9-9c2.52 0 4.93 1 6.74 2.74L21 8M21 3v5h-5" stroke="#e8e9ec" stroke-width="1.4" stroke-linecap="round" stroke-linejoin="round"/></svg>
<div style="position:absolute;left:1328px;top:159px;width:1238px;height:48px;background:#23262d;border-radius:10px;"></div>
<svg style="position:absolute;left:1335.7px;top:170.1px;" width="25.2" height="25.2" viewBox="0 0 24 24" fill="none"><path d="M10 13a5 5 0 0 0 7.54.54l3-3a5 5 0 0 0-7.07-7.07l-1.72 1.71M14 11a5 5 0 0 0-7.54-.54l-3 3a5 5 0 0 0 7.07 7.07l1.71-1.71" stroke="#aeb1b7" stroke-width="1.9" stroke-linecap="round" stroke-linejoin="round"/></svg>
<div class="t" style="left:1365.0px;top:169.2px;font-family:'Liberation Sans', sans-serif;font-size:28.00px;font-weight:400;color:#c9ccd1;letter-spacing:-0.38px;">.replit.dev/</div>
<svg style="position:absolute;left:2580px;top:166px;" width="36" height="34" viewBox="0 0 36 34" fill="none"><path d="M15.5 20.2 H6.8 a2 2 0 0 1 -2 -2 V6.8 a2 2 0 0 1 2 -2 H24.6 a2 2 0 0 1 2 2 V11.5 M8.5 24.2 H15.5 M12.3 20.2 V24.2" stroke="#a9acb2" stroke-width="2" stroke-linecap="round" stroke-linejoin="round"/><rect x="22.7" y="14.8" width="9.3" height="14.8" rx="2" stroke="#a9acb2" stroke-width="2"/></svg>
<svg style="position:absolute;left:2634.6px;top:165.6px;" width="33.6" height="33.6" viewBox="0 0 24 24" fill="none"><path d="M14.7 6.3a1 1 0 0 0 0 1.4l1.6 1.6a1 1 0 0 0 1.4 0l3.77-3.77a6 6 0 0 1-7.94 7.94l-6.91 6.91a2.12 2.12 0 0 1-3-3l6.91-6.91a6 6 0 0 1 7.94-7.94l-3.76 3.76z" stroke="#a9acb2" stroke-width="1.43" stroke-linecap="round" stroke-linejoin="round"/></svg>
<svg style="position:absolute;left:2685.1px;top:165.4px;" width="35" height="35" viewBox="0 0 24 24" fill="none"><path d="M15 3h6v6M10 14 21 3M18 13v6a2 2 0 0 1-2 2H5a2 2 0 0 1-2-2V8a2 2 0 0 1 2-2h6" stroke="#a9acb2" stroke-width="1.37" stroke-linecap="round" stroke-linejoin="round"/></svg>
<div style="position:absolute;left:1152px;top:218px;width:1582px;height:2px;background:#2a2d34;border-radius:0;"></div>
<div style="position:absolute;left:1152px;top:220px;width:1582px;height:72px;background:#1a4180;border-radius:0;"></div>
<svg style="position:absolute;left:1166px;top:242px;" width="29" height="29" viewBox="0 0 29 29" fill="none"><circle cx="14.5" cy="14.5" r="13" stroke="#c7dbfb" stroke-width="2"/><path d="M14.5 12.5 V21" stroke="#c7dbfb" stroke-width="2" stroke-linecap="round"/><circle cx="14.5" cy="8.5" r="1.5" fill="#c7dbfb"/></svg>
<div class="t" style="left:1213.0px;top:244.3px;font-family:'Liberation Sans', sans-serif;font-size:25.51px;font-weight:400;color:#c9dcfb;letter-spacing:-0.70px;">Ready to share with the world?</div>
<div style="position:absolute;left:1555px;top:228px;width:143px;height:56px;background:#2455a6;border-radius:8px;"></div>
<svg style="position:absolute;left:1576px;top:243px;" width="19" height="24" viewBox="0 0 28 32" fill="none"><path d="M5.1 19 A11.3 11.3 0 1 1 20.8 19 M1.9 11.8 H24.1 M13 0.5 C9.5 3 8 7 8.2 11.8 C8.3 13 8.6 14 8.9 15 M13 0.5 C16.5 3 18 7 17.8 11.8 C17.7 13 17.4 14 17.1 15 M13 17.5 V31 M6 23.1 L13 16.3 L20 23.1" stroke="#dfeaff" stroke-width="2.2" stroke-linecap="round" stroke-linejoin="round"/></svg>
<div class="t" style="left:1606.0px;top:244.8px;font-family:'Liberation Sans', sans-serif;font-size:24.89px;font-weight:400;color:#eaf1ff;letter-spacing:-0.70px;">Deploy</div>
<svg style="position:absolute;left:2689px;top:247px;" width="18" height="18" viewBox="0 0 18 18" fill="none"><path d="M1 1 L17 17 M17 1 L1 17" stroke="#c9dcfb" stroke-width="2" stroke-linecap="round"/></svg>
<div style="position:absolute;left:1152px;top:292px;width:1582px;height:128px;background:#ffffff;border-radius:0;"></div>
<div style="position:absolute;left:1152px;top:419px;width:1582px;height:2px;background:#e3e8f0;border-radius:0;"></div>
<div style="position:absolute;left:1152px;top:421px;width:1582px;height:996px;background:linear-gradient(100deg,#f9fafc 0%,#f6f8fb 55%,#f2f5fb 100%);border-radius:0;"></div>
<div class="t" style="left:1201.0px;top:335.4px;font-family:'Liberation Sans', sans-serif;font-size:41.86px;font-weight:700;color:#1e2433;letter-spacing:-0.70px;">AI Patterns</div>
<div style="position:absolute;left:2531px;top:316px;width:155px;height:80px;background:#3a63e3;border-radius:40px;"></div>
<div class="t" style="left:2564.0px;top:342.4px;font-family:'Liberation Sans', sans-serif;font-size:29.00px;font-weight:400;color:#ffffff;letter-spacing:-0.05px;-webkit-text-stroke:0.7px currentColor;">Sign In</div>
<div style="position:absolute;left:1735px;top:583px;width:417px;height:55px;background:#dde7fa;border-radius:28px;"></div>
<svg style="position:absolute;left:1759px;top:593px;" width="33" height="33" viewBox="0 0 24 24" fill="none"><g stroke="#2f4fd0" stroke-width="1.9" stroke-linecap="round" stroke-linejoin="round"><path d="M9.937 15.5A2 2 0 0 0 8.5 14.063l-6.135-1.582a.5.5 0 0 1 0-.962L8.5 9.936A2 2 0 0 0 9.937 8.5l1.582-6.135a.5.5 0 0 1 .963 0L14.063 8.5A2 2 0 0 0 15.5 9.937l6.135 1.581a.5.5 0 0 1 0 .964L15.5 14.063a2 2 0 0 0-1.437 1.437l-1.582 6.135a.5.5 0 0 1-.963 0z"/><path d="M20 3v4M22 5h-4M4 17v2M5 18H3"/></g></svg>
<div class="t" style="left:1808.0px;top:596.5px;font-family:'Liberation Sans', sans-serif;font-size:30.00px;font-weight:400;color:#3451c4;letter-spacing:-0.17px;-webkit-text-stroke:0.3px currentColor;">Discover AI UX Patterns</div>
<div class="t" style="left:1339.0px;top:697.7px;font-family:'Liberation Sans', sans-serif;font-size:98.00px;font-weight:700;color:#111727;letter-spacing:0.05px;">The Ultimate Collection of</div>
<div class="t" style="left:1464.0px;top:818.7px;font-family:'Liberation Sans', sans-serif;font-size:98.00px;font-weight:700;color:#3b63e2;letter-spacing:0.29px;">AI Interface Patterns</div>
<div class="t" style="left:1267.0px;top:981.0px;font-family:'Liberation Sans', sans-serif;font-size:40.00px;font-weight:400;color:#4b5563;letter-spacing:1.13px;">Discover, collect, and share the best AI UX and UI patterns from leading</div>
<div class="t" style="left:1252.0px;top:1038.0px;font-family:'Liberation Sans', sans-serif;font-size:40.00px;font-weight:400;color:#4b5563;letter-spacing:1.30px;">products. Perfect for designers, researchers, and developers building the</div>
<div class="t" style="left:1654.0px;top:1094.0px;font-family:'Liberation Sans', sans-serif;font-size:40.00px;font-weight:400;color:#4b5563;letter-spacing:1.36px;">future of human-AI interaction.</div>
<div style="position:absolute;left:1559px;top:1222px;width:408px;height:88px;background:#3a63e2;border-radius:40px;"></div>
<div class="t" style="left:1624.0px;top:1249.4px;font-family:'Liberation Sans', sans-serif;font-size:36.00px;font-weight:400;color:#ffffff;letter-spacing:0.66px;-webkit-text-stroke:0.7px currentColor;">Get Started Free</div>
<div style="position:absolute;left:2001px;top:1224px;width:326px;height:84px;background:#ffffff;border-radius:40px;"></div>
<div class="t" style="left:2066.0px;top:1249.4px;font-family:'Liberation Sans', sans-serif;font-size:36.00px;font-weight:400;color:#111111;letter-spacing:1.21px;-webkit-text-stroke:0.7px currentColor;">Learn More</div>
<div style="position:absolute;left:1277px;top:1405px;width:1335px;height:40px;background:#ffffff;border-radius:24px;border:2px solid #e8ecf2;box-sizing:border-box;"></div>
<div style="position:absolute;left:1152px;top:1417px;width:1582px;height:280px;background:#212329;border-radius:0 0 12px 12px;"></div>
<div style="position:absolute;left:1152px;top:1417px;width:132px;height:81px;background:#30333b;border-radius:0;"></div>
<div style="position:absolute;left:1152px;top:1494px;width:132px;height:4px;background:#3b7ae8;border-radius:0;"></div>
<div style="position:absolute;left:1152px;top:1497px;width:1582px;height:2px;background:#2c2f36;border-radius:0;"></div>
<div class="t" style="left:1173.0px;top:1444.9px;font-family:'Liberation Sans', sans-serif;font-size:25.94px;font-weight:400;color:#f2f3f5;letter-spacing:-0.70px;">Console</div>
<div class="t" style="left:1305.0px;top:1445.0px;font-family:'Liberation Sans', sans-serif;font-size:25.88px;font-weight:400;color:#a7abb2;letter-spacing:-0.70px;">Elements</div>
<div class="t" style="left:1449.0px;top:1444.9px;font-family:'Liberation Sans', sans-serif;font-size:26.00px;font-weight:400;color:#a7abb2;letter-spacing:-0.39px;">Network</div>
<div class="t" style="left:1583.0px;top:1445.0px;font-family:'Liberation Sans', sans-serif;font-size:25.86px;font-weight:400;color:#a7abb2;letter-spacing:-0.70px;">Resources</div>
<div class="t" style="left:1741.0px;top:1444.9px;font-family:'Liberation Sans', sans-serif;font-size:26.00px;font-weight:400;color:#a7abb2;">Settings</div>
<svg style="position:absolute;left:1174px;top:1525px;" width="28" height="28" viewBox="0 0 28 28" fill="none"><circle cx="14" cy="14" r="11.5" stroke="#a3a7ae" stroke-width="3.2"/><path d="M6 6 L22 22" stroke="#a3a7ae" stroke-width="3.2"/></svg>
<div style="position:absolute;left:1226px;top:1519px;width:42px;height:40px;background:#353841;border-radius:3px;"></div>
<div class="t" style="left:1234.0px;top:1527.6px;font-family:'Liberation Sans', sans-serif;font-size:24.00px;font-weight:400;color:#f2f3f5;letter-spacing:-0.34px;">All</div>
<div class="t" style="left:1285.0px;top:1527.6px;font-family:'Liberation Sans', sans-serif;font-size:24.00px;font-weight:400;color:#a7abb2;letter-spacing:-0.34px;">Info</div>
<div class="t" style="left:1349.0px;top:1527.6px;font-family:'Liberation Sans', sans-serif;font-size:24.00px;font-weight:400;color:#a7abb2;letter-spacing:-0.08px;">Warning</div>
<div class="t" style="left:1462.0px;top:1527.6px;font-family:'Liberation Sans', sans-serif;font-size:24.00px;font-weight:400;color:#a7abb2;letter-spacing:-0.59px;">Error</div>
<svg style="position:absolute;left:2636px;top:1524px;" width="32" height="30" viewBox="0 0 32 30" fill="none"><path d="M3.7 4.6 H29.1 V6 L20 17.5 V23.5 Q20 25.4 16.4 25.4 Q12.8 25.4 12.8 23.5 V17.5 L3.7 6 Z" stroke="#a3a9b5" stroke-width="3" stroke-linejoin="round"/><rect x="14.4" y="17" width="4" height="7" fill="#a3a9b5"/></svg>
<svg style="position:absolute;left:2684px;top:1524px;" width="28" height="30" viewBox="0 0 28 30" fill="none"><path d="M5.2 21 V7.5 a3 3 0 0 1 3 -3 H19" stroke="#6b6f77" stroke-width="2.5" stroke-linecap="round"/><rect x="9" y="8" width="15.7" height="19" rx="3.5" fill="#5f636b"/></svg>
<div style="position:absolute;left:1152px;top:1577px;width:1582px;height:120px;background:#272a31;border-radius:0 0 12px 12px;"></div>
<div style="position:absolute;left:1152px;top:1577px;width:1582px;height:2px;background:#2c2f36;border-radius:0;"></div>
<div style="position:absolute;left:1152px;top:1606px;width:1582px;height:2px;background:#30333a;border-radius:0;"></div>
<div style="position:absolute;left:1152px;top:1651px;width:1582px;height:2px;background:#30333a;border-radius:0;"></div>
<div class="t" style="left:1176.0px;top:1576.1px;font-family:'Liberation Mono', monospace;font-size:23.50px;font-weight:400;color:#a6abb4;letter-spacing:0.05px;clip-path:inset(2px 0 0 0);">[vite] connecting...</div>
<div style="position:absolute;left:1152px;top:1577px;width:1582px;height:2px;background:#2c2f36;border-radius:0;"></div>
<div class="t" style="left:1176.0px;top:1619.1px;font-family:'Liberation Mono', monospace;font-size:23.50px;font-weight:400;color:#a6abb4;letter-spacing:0.02px;">[vite] connected.</div>
<svg style="position:absolute;left:1179px;top:1663px;" width="16" height="24" viewBox="0 0 16 24" fill="none"><path d="M2 2 L13 12 L2 22" stroke="#3b7ae8" stroke-width="2.1" stroke-linecap="round" stroke-linejoin="round"/></svg>
</body></html>
